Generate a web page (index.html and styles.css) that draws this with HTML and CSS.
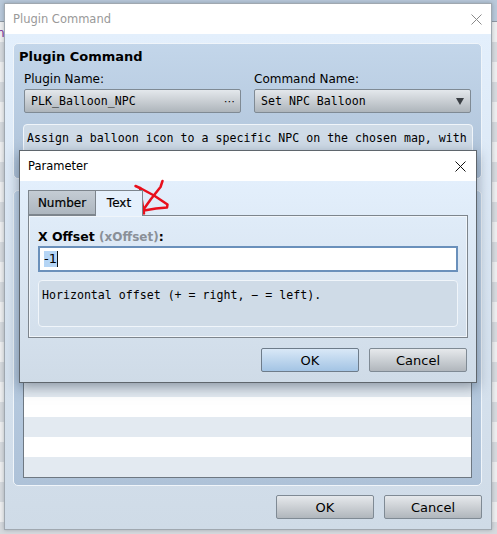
FILE: index.html
```html
<!DOCTYPE html>
<html>
<head>
    <title>Plugin Command</title>
    <meta name="viewport" content="width=device-width, initial-scale=1.0">
    <link rel="stylesheet" href="styles.css">
</head>
<body>
    <div class="backdrop">
        <div class="backRows"></div>
        <span class="backText">n</span>
    </div>

    <!-- main window -->
    <div class="window mainWindow">
        <div class="titleBar">
            <span class="titleDim">Plugin Command</span>
            <svg class="closeIcon dim" width="11" height="11" viewBox="0 0 11 11"><path d="M0.5 0.5L10.5 10.5M10.5 0.5L0.5 10.5"/></svg>
        </div>
        <div class="windowBody">
            <div class="group firstGroup">
                <div class="groupTitle">Plugin Command</div>
                <div class="fieldRow">
                    <div class="field">
                        <label>Plugin Name:</label>
                        <div class="picker"><span>PLK_Balloon_NPC</span><span class="dots">⋯</span></div>
                    </div>
                    <div class="field">
                        <label>Command Name:</label>
                        <div class="picker"><span>Set NPC Balloon</span><span class="arrow"></span></div>
                    </div>
                </div>
                <div class="noteBox mainNote">Assign a balloon icon to a specific NPC on the chosen map, with</div>
            </div>
            <div class="group secondGroup">
                <div class="argList">
                    <div class="argRow alt"></div>
                    <div class="argRow"></div>
                    <div class="argRow alt"></div>
                    <div class="argRow"></div>
                    <div class="argRow alt"></div>
                </div>
            </div>
            <div class="buttonRow">
                <button>OK</button>
                <button>Cancel</button>
            </div>
        </div>
    </div>

    <!-- parameter dialog -->
    <div class="window paramWindow">
        <div class="titleBar">
            <span>Parameter</span>
            <svg class="closeIcon" width="11" height="11" viewBox="0 0 11 11"><path d="M0.5 0.5L10.5 10.5M10.5 0.5L0.5 10.5"/></svg>
        </div>
        <div class="windowBody">
            <div class="tabs">
                <div class="tab">Number</div>
                <div class="tab active">Text</div>
            </div>
            <div class="tabPanel">
                <label class="paramLabel">X Offset <span class="muted">(xOffset)</span>:</label>
                <div class="textInput"><span class="selected">-1</span><span class="caret"></span></div>
                <div class="noteBox paramNote">Horizontal offset (+ = right, − = left).</div>
            </div>
            <div class="buttonRow">
                <button class="primary">OK</button>
                <button>Cancel</button>
            </div>
        </div>
    </div>

    <svg class="scribble" width="497" height="534" viewBox="0 0 497 534">
        <path d="M135.500 186L141 188.500L154 195.500L167.500 204.500L167 207.500L156 208.500L144 210.500"/>
        <path d="M140 188L142 201L144 213.500"/>
        <path d="M162.500 181L160.500 187L151 199L143.500 209.500"/>
    </svg>
</body>
</html>
```

FILE: styles.css
```css
* { box-sizing: border-box; }
html, body {
    margin: 0;
    height: 534px;
    overflow: hidden;
}
body {
    position: relative;
    width: 497px;
    font-family: "DejaVu Sans", sans-serif;
    font-size: 12px;
    color: #000;
    background: #d4dde6;
}

.backdrop {
    position: absolute;
    inset: 0;
    background: #b9c9da;
}
.backRows {
    position: absolute;
    top: 21px;
    left: 0;
    right: 0;
    bottom: 0;
    border-top: 1px solid #8f99a3;
    background: repeating-linear-gradient(#eeeff0 0 20px, #d6dade 20px 40px);
}
.backText {
    position: absolute;
    left: -3px;
    top: 26px;
    color: #7a2a9a;
}

.window {
    position: absolute;
    display: flex;
    flex-direction: column;
    border: 1px solid #8b949c;
}
.mainWindow {
    left: 4px;
    top: 3px;
    width: 488px;
    height: 527px;
    border-color: #a0a8b0;
    box-shadow: 0 0 4px rgba(40, 50, 60, 0.3);
}
.paramWindow {
    left: 19px;
    top: 150px;
    width: 458px;
    height: 233px;
    border-color: #5f666d;
    box-shadow: 0 4px 12px rgba(50, 65, 85, 0.5);
}
.titleBar {
    height: 30px;
    flex: none;
    display: flex;
    align-items: center;
    justify-content: space-between;
    padding: 0 9px 0 8px;
    background: #fff;
    font-size: 11.5px;
}
.paramWindow .titleBar { padding-right: 10px; }
.titleDim { color: #999; }
.closeIcon { fill: none; stroke: #111; stroke-width: 1; }
.closeIcon.dim { stroke: #8a8a8a; }

.windowBody {
    flex: 1;
    display: flex;
    flex-direction: column;
    background: linear-gradient(#e3effc, #cfdbe7);
}
.mainWindow .windowBody { padding: 9px 9px 0 8px; }
.paramWindow .windowBody { padding: 9px 8px 0 8px; }

.group {
    border: 1px solid #f0f5fa;
    border-radius: 5px;
    background: linear-gradient(#c3d6ea, #aec2d8);
}
.firstGroup {
    height: 136px;
    padding: 4px 9px 0 9px;
    overflow: hidden;
}
.secondGroup {
    height: 296px;
    margin-top: 11px;
    padding: 0 9px 7px 9px;
    display: flex;
    flex-direction: column;
    justify-content: flex-end;
}
.groupTitle {
    margin-left: -4px;
    height: 18px;
    line-height: 18px;
    font-weight: bold;
    font-size: 13px;
}
.fieldRow {
    display: grid;
    grid-template-columns: 217px 217px;
    gap: 13px;
    margin-top: 6px;
    margin-left: 1px;
}
.field label {
    display: block;
    height: 15px;
    line-height: 15px;
}
.picker {
    height: 24px;
    margin-top: 2px;
    padding: 0 6px;
    display: flex;
    align-items: center;
    justify-content: space-between;
    border: 1px solid #7f8a94;
    border-radius: 2px;
    background: linear-gradient(#e4e8ec, #aeb5bb);
    font-family: "DejaVu Sans Mono", monospace;
    font-size: 11.6px;
}
.dots {
    font-family: "DejaVu Sans", sans-serif;
    font-size: 11px;
    margin-right: -1px;
}
.arrow {
    width: 0;
    height: 0;
    margin-right: 0;
    border-left: 4px solid transparent;
    border-right: 4px solid transparent;
    border-top: 7px solid #3a3f44;
}
.noteBox {
    border: 1px solid #f0f5fa;
    border-radius: 4px;
    background: #cfdbe7;
    font-family: "DejaVu Sans Mono", monospace;
    font-size: 11.6px;
    line-height: 16px;
    padding: 5px 3px;
    white-space: nowrap;
}
.mainNote {
    width: 450px;
    height: 60px;
    margin-top: 11px;
}

.argList {
    border: 1px solid #6e7882;
    border-top: none;
    background: #fff;
}
.argRow { height: 20px; background: #fff; }
.argRow.alt { background: #e3eaf1; }

.buttonRow {
    display: flex;
    justify-content: flex-end;
    gap: 10px;
    margin-top: 9px;
}
.paramWindow .buttonRow { margin-top: 10px; margin-right: 1px; }
button {
    width: 98px;
    height: 24px;
    padding: 0;
    border: 1px solid #7f8a94;
    border-radius: 2px;
    background: linear-gradient(#e6e9ec, #b0b6bc);
    font-family: "DejaVu Sans", sans-serif;
    font-size: 13px;
    color: #000;
}
button.primary {
    background: linear-gradient(#d9e8f7, #a3c4e4);
    border-color: #6e7c8a;
}

.tabs {
    display: flex;
    height: 26px;
    margin-bottom: -1px;
    position: relative;
    z-index: 1;
}
.tab {
    width: 68px;
    height: 25px;
    border: 1px solid #7d858d;
    background: linear-gradient(#c4ccd4, #adb6bf);
    text-align: center;
    line-height: 24px;
    font-size: 12px;
    -webkit-text-stroke: 0.2px #000;
}
.tab.active {
    width: 47px;
    height: 26px;
    border-bottom: none;
    border-left: none;
    background: #e5f0fc;
}
.tabPanel {
    height: 123px;
    padding: 13px 9px 0 9px;
    border: 1px solid #7d858d;
    box-shadow: inset 0 0 0 1px #f0f5fa;
    display: flex;
    flex-direction: column;
}
.paramLabel {
    height: 16px;
    line-height: 16px;
    font-weight: bold;
    font-size: 12.5px;
}
.muted { color: #8a9098; font-weight: bold; font-size: 12px; }
.textInput {
    height: 26px;
    margin-top: 1px;
    padding-left: 4px;
    display: flex;
    align-items: center;
    border: 2px solid #6a90bb;
    background: #fff;
    font-size: 13px;
}
.selected { background: #b5d5f5; height: 16px; line-height: 16px; }
.caret { width: 1px; height: 16px; background: #111; }
.paramNote {
    height: 47px;
    margin-top: 8px;
    padding: 6px 3px;
}

.scribble {
    position: absolute;
    left: 0;
    top: 0;
    pointer-events: none;
    fill: none;
    stroke: #e8101c;
    stroke-width: 2.500;
    stroke-linecap: round;
    stroke-linejoin: round;
}
```
